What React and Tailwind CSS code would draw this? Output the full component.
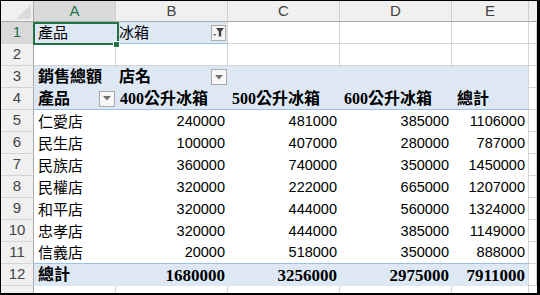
import React from "react";

const SANS = "font-['Liberation_Sans','Noto_Sans_CJK_TC',sans-serif]";
const BOLD = "font-['Liberation_Serif','Noto_Sans_CJK_TC',serif] font-bold";

// column widths: A..E, then the sliver of F at the right edge
const W = ["w-[82px]", "w-[112px]", "w-[112px]", "w-[112px]", "w-[77px]"];

const stores = [
  ["仁愛店", "240000", "481000", "385000", "1106000"],
  ["民生店", "100000", "407000", "280000", "787000"],
  ["民族店", "360000", "740000", "350000", "1450000"],
  ["民權店", "320000", "222000", "665000", "1207000"],
  ["和平店", "320000", "444000", "560000", "1324000"],
  ["忠孝店", "320000", "444000", "385000", "1149000"],
  ["信義店", "20000", "518000", "350000", "888000"],
];
const totals = ["總計", "1680000", "3256000", "2975000", "7911000"];

const grid = "border-r border-b border-[#d4d4d4]";
const blue = "bg-[#dde8f4]";

function RowHead({ n, active }) {
  return (
    <div
      className={`w-[33px] shrink-0 h-full flex items-center justify-center border-r border-b border-r-[#ababab] border-b-[#d4d4d4] text-[15px] ${SANS} ${
        active ? "bg-[#d9d9d9] text-[#217346]" : "bg-[#f0f0f0] text-[#444]"
      }`}
    >
      {n}
    </div>
  );
}

function Cell({ w, className = "", children }) {
  return (
    <div className={`${w} shrink-0 h-full flex items-center leading-none ${className}`}>
      {children}
    </div>
  );
}

function Row({ children, h = "h-[22px]" }) {
  return <div className={`flex ${h} shrink-0`}>{children}</div>;
}

function DropButton() {
  return (
    <div className="ml-auto mr-[1px] w-[16px] h-[16px] border border-[#ababab] bg-[#f7f7f7] flex items-center justify-center">
      <svg width="8" height="5" viewBox="0 0 8 5">
        <path d="M0 0h8L4 4.5z" fill="#707070" />
      </svg>
    </div>
  );
}

function FilterButton() {
  return (
    <div className="ml-auto mr-[1px] w-[15px] h-[16px] border border-[#ababab] bg-[#f4f4f4] flex items-center justify-center">
      <svg width="11" height="9" viewBox="0 0 11 9">
        <path d="M3 0h8L8.2 3.4V8.5H5.8V3.4z" fill="#404040" />
        <path d="M0 6h3.4L1.7 8z" fill="#606060" />
      </svg>
    </div>
  );
}

export default function App() {
  return (
    <div className="relative w-[540px] h-[295px] bg-white border-l border-t border-black border-r-[3px] border-b-[2px] overflow-hidden flex flex-col">
      {/* column headers */}
      <div className={`flex h-[21px] shrink-0 text-[15px] ${SANS}`}>
        <div className="w-[33px] shrink-0 h-full bg-[#f0f0f0] border-r border-b border-[#ababab] flex items-end justify-end p-[2px]">
          <svg width="15" height="15" viewBox="0 0 15 15">
            <path d="M15 0V15H0z" fill="#dcdcdc" />
          </svg>
        </div>
        {["A", "B", "C", "D", "E"].map((c, i) => (
          <div
            key={c}
            className={`${W[i]} shrink-0 h-full flex items-center justify-center border-r border-b border-r-[#cfcfcf] border-b-[#ababab] ${
              i === 0 ? "bg-[#d9d9d9] text-[#217346]" : "bg-[#f0f0f0] text-[#444]"
            }`}
          >
            {c}
          </div>
        ))}
        <div className="flex-1 h-full bg-[#f0f0f0] border-b border-[#ababab]" />
      </div>

      {/* 1: page field */}
      <Row>
        <RowHead n="1" active />
        <Cell w={W[0]} className={`${blue} border-b border-[#9bc2e6] pl-[4px] text-[15px] ${SANS}`}>產品</Cell>
        <Cell w={W[1]} className={`${blue} border-b border-r border-b-[#9bc2e6] border-r-[#d4d4d4] pl-[3px] text-[15px] ${SANS}`}>
          冰箱
          <FilterButton />
        </Cell>
        <Cell w={W[2]} className={grid} />
        <Cell w={W[3]} className={grid} />
        <Cell w={W[4]} className={grid} />
        <div className={`flex-1 h-full ${grid}`} />
      </Row>

      {/* 2: empty */}
      <Row>
        <RowHead n="2" />
        {W.map((w, i) => (
          <Cell key={i} w={w} className={grid} />
        ))}
        <div className={`flex-1 h-full ${grid}`} />
      </Row>

      {/* 3: value / column field */}
      <Row>
        <RowHead n="3" />
        <Cell w={W[0]} className={`${blue} pl-[4px] text-[16px] ${BOLD}`}>銷售總額</Cell>
        <Cell w={W[1]} className={`${blue} pl-[3px] text-[16px] ${BOLD}`}>
          店名
          <DropButton />
        </Cell>
        <Cell w={W[2]} className={blue} />
        <Cell w={W[3]} className={blue} />
        <Cell w={W[4]} className={`${blue} border-r border-[#d4d4d4]`} />
        <div className={`flex-1 h-full ${grid}`} />
      </Row>

      {/* 4: header labels */}
      <Row>
        <RowHead n="4" />
        <Cell w={W[0]} className={`${blue} border-b border-[#9bc2e6] pl-[4px] text-[16px] ${BOLD}`}>
          產品
          <DropButton />
        </Cell>
        {["400公升冰箱", "500公升冰箱", "600公升冰箱"].map((t, i) => (
          <Cell key={t} w={W[i + 1]} className={`${blue} border-b border-[#9bc2e6] pl-[4px] text-[16px] ${BOLD}`}>
            {t}
          </Cell>
        ))}
        <Cell w={W[4]} className={`${blue} border-b border-r border-b-[#9bc2e6] border-r-[#d4d4d4] pl-[5px] text-[16px] ${BOLD}`}>
          總計
        </Cell>
        <div className={`flex-1 h-full ${grid}`} />
      </Row>

      {/* 5-11: stores */}
      {stores.map((r, ri) => (
        <Row key={r[0]}>
          <RowHead n={ri + 5} />
          {r.map((v, i) => (
            <Cell
              key={i}
              w={W[i]}
              className={`text-black ${SANS} ${
                i === 0 ? "pl-[4px] text-[15px]" : "justify-end pr-[3px] text-[14.5px]"
              } ${i === 4 ? "border-r border-[#d4d4d4]" : ""} ${
                ri === stores.length - 1 ? "border-b border-b-[#9bc2e6]" : ""
              }`}
            >
              {v}
            </Cell>
          ))}
          <div className={`flex-1 h-full ${grid}`} />
        </Row>
      ))}

      {/* 12: grand total */}
      <Row>
        <RowHead n="12" />
        {totals.map((v, i) => (
          <Cell
            key={i}
            w={W[i]}
            className={`${blue} ${BOLD} ${
              i === 0 ? "pl-[4px] text-[16px]" : "justify-end pr-[3px] text-[17px]"
            } ${i === 4 ? "border-r border-[#d4d4d4]" : ""}`}
          >
            {v}
          </Cell>
        ))}
        <div className={`flex-1 h-full ${grid}`} />
      </Row>

      {/* 13: partly visible */}
      <div className="flex flex-1">
        <div className="w-[33px] shrink-0 bg-[#f0f0f0] border-r border-[#ababab]" />
        {W.map((w, i) => (
          <div key={i} className={`${w} shrink-0 border-r border-[#d4d4d4]`} />
        ))}
        <div className="flex-1" />
      </div>

      {/* active cell A1 */}
      <div className="absolute left-[32px] top-[21px] w-[86px] h-[23px] border-2 border-[#217346] pointer-events-none" />
      <div className="absolute left-[112px] top-[40px] w-[7px] h-[7px] bg-[#217346] border border-white pointer-events-none" />
    </div>
  );
}
